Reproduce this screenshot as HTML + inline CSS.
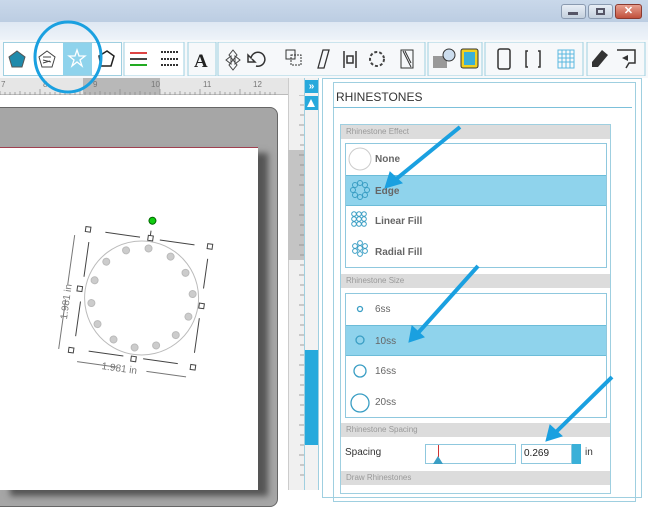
<!DOCTYPE html>
<html><head><meta charset="utf-8"><style>
*{margin:0;padding:0;box-sizing:border-box}
body{width:648px;height:490px;overflow:hidden;position:relative;background:#fff;font-family:"Liberation Sans",sans-serif}
.a{position:absolute}
.grp{position:absolute;top:42px;height:34px;border:1px solid #9fcfe0;background:#fff}
.hdr{position:absolute;left:341px;width:269px;height:14px;background:#dcdcdc;font-size:8px;color:#999;padding-left:5px;line-height:14px}
.list{position:absolute;left:345px;width:262px;border:1px solid #8fc8de;background:#fff}
.row{height:31px;position:relative;font-size:10px;font-weight:bold;color:#666;line-height:31px;padding-left:29px}
.sel{background:#8fd3ec;border-top:1px solid #6cbcd8;border-bottom:1px solid #6cbcd8}
</style></head><body>
<div class="a" style="left:0;top:0;width:648px;height:22px;background:linear-gradient(#c9d8ea,#bccde2)"></div>
<div class="a" style="left:0;top:22px;width:648px;height:18px;background:linear-gradient(#dfe8f3,#eef3f9)"></div>
<div class="a" style="left:561px;top:4px;width:25px;height:15px;border:1px solid #8a9ab0;border-radius:3px;background:linear-gradient(#e8eef6,#c4d0de)"></div>
<div class="a" style="left:568px;top:12px;width:10px;height:3px;background:#556"></div>
<div class="a" style="left:588px;top:4px;width:25px;height:15px;border:1px solid #8a9ab0;border-radius:3px;background:linear-gradient(#e8eef6,#c4d0de)"></div>
<div class="a" style="left:596px;top:8px;width:9px;height:7px;border:2px solid #556"></div>
<div class="a" style="left:615px;top:4px;width:27px;height:15px;border:1px solid #8a3a30;border-radius:3px;background:linear-gradient(#e8a090,#c0503c);color:#fff;font-size:11px;font-weight:bold;text-align:center;line-height:13px">✕</div>
<div class="a" style="left:0;top:40px;width:648px;height:38px;background:#f6f8fa"></div>
<div class="grp" style="left:3px;width:119px"></div>
<div class="a" style="left:63px;top:43px;width:29px;height:32px;background:#8fd3ec"></div>
<svg class="a" style="left:0;top:42px" width="648" height="34">
<polygon points="17,9 25,15 22,25 12,25 9,15" fill="#1f8aab" stroke="#555"/>
<polygon points="47,9 55,15 52,25 42,25 39,15" fill="#fff" stroke="#444"/>
<path d="M43 15l8 0M43 18l8 2M43 21l7 -2" stroke="#444" fill="none"/>
<polygon points="77,8 79,14 85,14 80,18 82,24 77,20 72,24 74,18 69,14 75,14" fill="none" stroke="#fff" stroke-width="1.3"/>
<polygon points="107,9 114,14 111,24 101,24 99,14" fill="#fff" stroke="#222" stroke-width="1.5"/>
<rect x="124" y="0" width="60" height="34" fill="#fff" stroke="#9fcfe0"/>
<path d="M130 11h17" stroke="#d44" stroke-width="2"/>
<path d="M130 17h17" stroke="#444" stroke-width="2"/><path d="M130 23h17" stroke="#2a2" stroke-width="2"/>
<path d="M161 10h17M161 17h17M161 23h17" stroke="#333" stroke-width="2" stroke-dasharray="2 1"/>
<rect x="188" y="0" width="28" height="34" fill="none" stroke="#9fcfe0"/>
<text x="194" y="25" font-family="Liberation Serif" font-weight="bold" font-size="19" fill="#222">A</text>
<rect x="218" y="0" width="207" height="34" fill="none" stroke="#9fcfe0"/>
<path d="M233 8l4 5-4 5-4-5zM233 18l4 5-4 5-4-5zM226 18l5-4v8zM240 18l-5-4v8z" fill="none" stroke="#444"/>
<path d="M256 24a7 7 0 1 0 -5 -8l-3 -3v7h7l-3 -3" fill="none" stroke="#333" stroke-width="1.5"/>
<rect x="286" y="8" width="9" height="9" fill="none" stroke="#333"/><rect x="291" y="13" width="10" height="10" fill="none" stroke="#333" stroke-dasharray="2 1"/>
<path d="M318 26l5-18h6l-5 18z" fill="none" stroke="#333" stroke-width="1.3"/>
<path d="M344 9v17M356 9v17M347 14h6v7h-6z" fill="none" stroke="#333" stroke-width="1.5"/>
<circle cx="377" cy="17" r="7" fill="none" stroke="#444" stroke-dasharray="3 2" stroke-width="2"/>
<rect x="401" y="8" width="12" height="18" fill="none" stroke="#333"/><path d="M403 9l8 16M405 9l6 12" stroke="#333"/>
<rect x="428" y="0" width="54" height="34" fill="none" stroke="#9fcfe0"/>
<rect x="433" y="14" width="14" height="12" fill="#999"/><circle cx="449" cy="13" r="6" fill="#cde" stroke="#333"/>
<rect x="461" y="7" width="17" height="19" rx="2" fill="#f2d020" stroke="#333"/><rect x="464" y="10" width="11" height="13" fill="#3ab0d8"/>
<rect x="485" y="0" width="98" height="34" fill="none" stroke="#9fcfe0"/>
<rect x="498" y="7" width="12" height="20" rx="2" fill="none" stroke="#333" stroke-width="1.5"/>
<path d="M528 9h-2v16h2M538 9h2v16h-2" fill="none" stroke="#333" stroke-width="1.5"/>
<path d="M558 8h16v18h-16zM558 12h16M558 16h16M558 20h16M562 8v18M566 8v18M570 8v18" fill="none" stroke="#5ab8e0"/>
<rect x="587" y="0" width="58" height="34" fill="none" stroke="#9fcfe0"/>
<path d="M592 20l10-12 6 5-10 12h-6z" fill="#333"/>
<path d="M617 8h18v13h-6l-3 5" fill="none" stroke="#333" stroke-width="1.5"/><path d="M622 16l6-3v6z" fill="#333"/>
</svg>
<div class="a" style="left:0;top:78px;width:288px;height:17px;background:#e6e6e6;border-bottom:1px solid #bbb"></div>
<div class="a" style="left:83px;top:78px;width:77px;height:17px;background:#b8b8b8"></div>
<svg class="a" style="left:0;top:78px" width="288" height="17">
<path d="M0 17v-4M5 17v-3M10 17v-3M15 17v-3M20 17v-4M25 17v-3M30 17v-3M35 17v-3M40 17v-6M45 17v-3M50 17v-3M55 17v-3M60 17v-4M65 17v-3M70 17v-3M75 17v-3M80 17v-6M85 17v-3M90 17v-3M95 17v-3M100 17v-4M105 17v-3M110 17v-3M115 17v-3M120 17v-6M125 17v-3M130 17v-3M135 17v-3M140 17v-4M145 17v-3M150 17v-3M155 17v-3M160 17v-6M165 17v-3M170 17v-3M175 17v-3M180 17v-4M185 17v-3M190 17v-3M195 17v-3M200 17v-6M205 17v-3M210 17v-3M215 17v-3M220 17v-4M225 17v-3M230 17v-3M235 17v-3M240 17v-6M245 17v-3M250 17v-3M255 17v-3M260 17v-4M265 17v-3M270 17v-3M275 17v-3" stroke="#888" stroke-width=".7"/>
<g font-size="8" fill="#777"><text x="1" y="9">7</text><text x="43" y="9">8</text><text x="93" y="9">9</text><text x="151" y="9">10</text><text x="203" y="9">11</text><text x="253" y="9">12</text></g>
</svg>
<div class="a" style="left:0;top:95px;width:288px;height:395px;background:#fff"></div>
<div class="a" style="left:-10px;top:107px;width:288px;height:400px;background:#a6a6a6;border:1px solid #666;border-radius:8px"></div>
<div class="a" style="left:0;top:147px;width:258px;height:343px;background:#fff;border-top:1px solid #a04050;box-shadow:10px 6px 6px #555"></div>
<svg class="a" style="left:57px;top:210px" width="170" height="180">
<g transform="rotate(8 85 85)">
<circle cx="85" cy="88" r="57" fill="none" stroke="#bbb"/>
<g fill="#ccc" stroke="#bbb">
<circle cx="85" cy="38" r="3.5"/><circle cx="108" cy="43" r="3.5"/><circle cx="125" cy="57" r="3.5"/><circle cx="135" cy="77" r="3.5"/><circle cx="134" cy="100" r="3.5"/><circle cx="124" cy="120" r="3.5"/><circle cx="106" cy="133" r="3.5"/><circle cx="85" cy="138" r="3.5"/><circle cx="63" cy="133" r="3.5"/><circle cx="45" cy="120" r="3.5"/><circle cx="36" cy="100" r="3.5"/><circle cx="36" cy="77" r="3.5"/><circle cx="45" cy="57" r="3.5"/><circle cx="63" cy="43" r="3.5"/>
</g>
<path d="M40 28h35M95 28h35M25 40v35M25 100v35M145 40v30M145 100v35M40 148h35M95 148h35M85 20v6" stroke="#444" fill="none"/>
<g fill="#fff" stroke="#444"><rect x="20" y="25" width="5" height="5"/><rect x="143" y="25" width="5" height="5"/><rect x="83" y="25" width="5" height="5"/><rect x="20" y="85" width="5" height="5"/><rect x="143" y="85" width="5" height="5"/><rect x="20" y="147" width="5" height="5"/><rect x="83" y="147" width="5" height="5"/><rect x="143" y="147" width="5" height="5"/></g>
<circle cx="85" cy="10" r="3.5" fill="#1c1" stroke="#060"/>
<path d="M10 35v50M10 100v50M30 160h40M100 160h40" stroke="#777"/>
<text x="55" y="164" font-size="10" fill="#777">1.981 in</text>
<text transform="translate(14 120) rotate(-90)" font-size="10" fill="#777">1.981 in</text>
</g></svg>
<div class="a" style="left:288px;top:78px;width:16px;height:412px;background:#f0f0f0;border-left:1px solid #ccc"></div>
<div class="a" style="left:288px;top:150px;width:16px;height:110px;background:#c4c4c4"></div>
<svg class="a" style="left:289px;top:95px" width="15" height="395"><path d="M15 0h-5M15 10h-4M15 20h-4M15 30h-5M15 40h-4M15 50h-4M15 60h-5M15 70h-4M15 80h-4M15 90h-5M15 100h-4M15 110h-4M15 120h-5M15 130h-4M15 140h-4M15 150h-5M15 160h-4M15 170h-4M15 180h-5M15 190h-4M15 200h-4M15 210h-5M15 220h-4M15 230h-4M15 240h-5M15 250h-4M15 260h-4M15 270h-5M15 280h-4M15 290h-4M15 300h-5M15 310h-4M15 320h-4M15 330h-5M15 340h-4M15 350h-4M15 360h-5M15 370h-4M15 380h-4" stroke="#888" stroke-width=".7"/></svg>
<div class="a" style="left:304px;top:78px;width:15px;height:412px;background:#f2f2f2;border-left:1px solid #9fcfe0;border-right:1px solid #9fcfe0"></div>
<div class="a" style="left:305px;top:80px;width:13px;height:13px;background:#27a9dc;color:#fff;font-size:10px;font-weight:bold;line-height:13px;text-align:center">»</div>
<div class="a" style="left:305px;top:96px;width:13px;height:14px;background:#27a9dc"></div>
<div class="a" style="left:307px;top:99px;width:0;height:0;border-left:4.5px solid transparent;border-right:4.5px solid transparent;border-bottom:8px solid #fff"></div>
<div class="a" style="left:305px;top:350px;width:13px;height:95px;background:#27a9dc"></div>
<div class="a" style="left:322px;top:78px;width:320px;height:420px;border:1px solid #9fcfe0;background:#fff"></div>
<div class="a" style="left:333px;top:82px;width:303px;height:420px;border:1px solid #9fcfe0"></div>
<div class="a" style="left:336px;top:90px;font-size:12px;color:#333">RHINESTONES</div>
<div class="a" style="left:333px;top:107px;width:299px;height:1px;background:#7cc0da"></div>
<div class="a" style="left:340px;top:124px;width:271px;height:370px;border:1px solid #9fcfe0"></div>
<div class="hdr" style="top:125px">Rhinestone Effect</div>
<div class="list" style="top:143px;height:125px">
<div class="row">None</div><div class="row sel">Edge</div><div class="row">Linear Fill</div><div class="row">Radial Fill</div></div>
<svg class="a" style="left:346px;top:144px" width="28" height="124">
<circle cx="14" cy="15" r="11" fill="#fff" stroke="#ccc"/>
<g fill="none" stroke="#3a9ec4"><circle cx="14" cy="39" r="2.5"/><circle cx="19" cy="41" r="2.5"/><circle cx="21" cy="46" r="2.5"/><circle cx="19" cy="51" r="2.5"/><circle cx="14" cy="53" r="2.5"/><circle cx="9" cy="51" r="2.5"/><circle cx="7" cy="46" r="2.5"/><circle cx="9" cy="41" r="2.5"/></g>
<g fill="none" stroke="#3a9ec4"><circle cx="8" cy="70" r="2.3"/><circle cx="13" cy="70" r="2.3"/><circle cx="18" cy="70" r="2.3"/><circle cx="8" cy="75" r="2.3"/><circle cx="13" cy="75" r="2.3"/><circle cx="18" cy="75" r="2.3"/><circle cx="8" cy="80" r="2.3"/><circle cx="13" cy="80" r="2.3"/><circle cx="18" cy="80" r="2.3"/></g>
<g fill="none" stroke="#3a9ec4"><circle cx="14" cy="104" r="2.4"/><circle cx="14" cy="99" r="2.4"/><circle cx="19" cy="102" r="2.4"/><circle cx="19" cy="107" r="2.4"/><circle cx="14" cy="110" r="2.4"/><circle cx="9" cy="107" r="2.4"/><circle cx="9" cy="102" r="2.4"/></g>
</svg>
<div class="hdr" style="top:274px">Rhinestone Size</div>
<div class="list" style="top:293px;height:125px">
<div class="row" style="font-weight:normal">6ss</div><div class="row sel" style="font-weight:normal">10ss</div><div class="row" style="font-weight:normal">16ss</div><div class="row" style="font-weight:normal">20ss</div></div>
<svg class="a" style="left:346px;top:294px" width="28" height="124">
<g fill="none" stroke="#3a9ec4" stroke-width="1.3"><circle cx="14" cy="15" r="2.5"/><circle cx="14" cy="46" r="4"/><circle cx="14" cy="77" r="6"/><circle cx="14" cy="109" r="9"/></g></svg>
<div class="hdr" style="top:423px">Rhinestone Spacing</div>
<div class="a" style="left:345px;top:447px;font-size:10px;color:#333">Spacing</div>
<div class="a" style="left:425px;top:444px;width:91px;height:20px;border:1px solid #8fc8de;background:#fff"></div>
<div class="a" style="left:438px;top:445px;width:1px;height:12px;background:#c33"></div>
<div class="a" style="left:433px;top:456px;width:0;height:0;border-left:5px solid transparent;border-right:5px solid transparent;border-bottom:8px solid #3a9ec4"></div>
<div class="a" style="left:521px;top:444px;width:51px;height:20px;border:1px solid #8fc8de;font-size:10px;line-height:18px;padding-left:2px;color:#222">0.269</div>
<div class="a" style="left:572px;top:444px;width:9px;height:20px;background:#3ab0d8"></div>
<div class="a" style="left:585px;top:447px;font-size:10px;color:#333">in</div>
<div class="hdr" style="top:471px">Draw Rhinestones</div>
<svg class="a" style="left:0;top:0" width="648" height="490">
<ellipse cx="68" cy="57" rx="33" ry="35" fill="none" stroke="#1aa0e0" stroke-width="3"/>
<g stroke="#1aa0e0" stroke-width="4" fill="#1aa0e0">
<line x1="460" y1="127" x2="395" y2="180"/><polygon points="385,188 390,172 402,183" stroke-width="1"/>
<line x1="478" y1="266" x2="418" y2="333"/><polygon points="409,342 412,326 424,337" stroke-width="1"/>
<line x1="612" y1="377" x2="556" y2="432"/><polygon points="546,441 550,425 562,436" stroke-width="1"/>
</g></svg>
</body></html>
